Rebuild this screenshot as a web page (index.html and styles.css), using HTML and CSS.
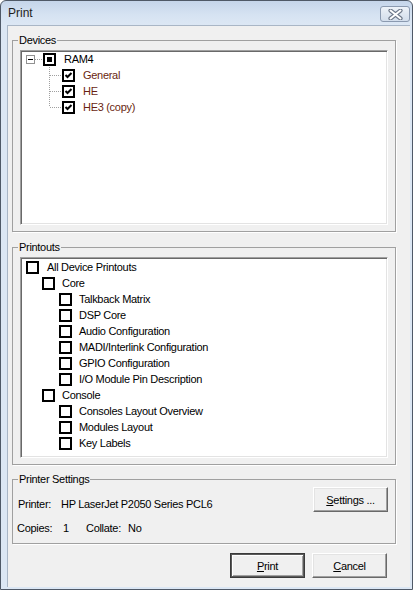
FILE: index.html
```html
<!DOCTYPE html>
<html lang="en">
<head>
    <meta charset="UTF-8">
    <title>Print</title>
    <link rel="stylesheet" href="styles.css">
</head>
<body>
    <div class="window">
        <div class="titlebar">
            <span class="title">Print</span>
            <div class="close">
                <svg width="15" height="11" viewBox="0 0 15 11">
                    <path d="M2.5 1.5 L12.5 9.5 M12.5 1.5 L2.5 9.5" stroke="#6d7889" stroke-width="4.2" stroke-linecap="round"/>
                    <path d="M2.5 1.5 L12.5 9.5 M12.5 1.5 L2.5 9.5" stroke="#fff" stroke-width="2" stroke-linecap="round"/>
                </svg>
            </div>
        </div>
        <div class="client">
            <fieldset class="group">
                <legend>Devices</legend>
                <div class="list devices">
                    <div class="row">
                        <svg class="expander" width="9" height="9" viewBox="0 0 9 9">
                            <rect x="0.5" y="0.5" width="8" height="8" fill="#fff" stroke="#919191"/>
                            <path d="M2 4.5 H7" stroke="#000"/>
                        </svg>
                        <span class="hline"></span>
                        <svg class="cb" width="13" height="13" viewBox="0 0 13 13">
                            <rect x="1" y="1" width="11" height="11" fill="#fff" stroke="#000" stroke-width="2"/>
                            <rect x="4" y="4" width="5" height="5" fill="#000"/>
                        </svg>
                        <span class="label">RAM4</span>
                    </div>
                    <div class="children">
                        <div class="row">
                            <span class="branch"></span>
                            <svg class="cb" width="13" height="13" viewBox="0 0 13 13">
                                <rect x="1" y="1" width="11" height="11" fill="#fff" stroke="#000" stroke-width="2"/>
                                <path d="M3.5 6 L5.5 8 L9.5 4" fill="none" stroke="#000" stroke-width="2"/>
                            </svg>
                            <span class="label dev">General</span>
                        </div>
                        <div class="row">
                            <span class="branch"></span>
                            <svg class="cb" width="13" height="13" viewBox="0 0 13 13">
                                <rect x="1" y="1" width="11" height="11" fill="#fff" stroke="#000" stroke-width="2"/>
                                <path d="M3.5 6 L5.5 8 L9.5 4" fill="none" stroke="#000" stroke-width="2"/>
                            </svg>
                            <span class="label dev">HE</span>
                        </div>
                        <div class="row">
                            <span class="branch"></span>
                            <svg class="cb" width="13" height="13" viewBox="0 0 13 13">
                                <rect x="1" y="1" width="11" height="11" fill="#fff" stroke="#000" stroke-width="2"/>
                                <path d="M3.5 6 L5.5 8 L9.5 4" fill="none" stroke="#000" stroke-width="2"/>
                            </svg>
                            <span class="label dev">HE3 (copy)</span>
                        </div>
                    </div>
                </div>
            </fieldset>

            <fieldset class="group printouts">
                <legend>Printouts</legend>
                <div class="list outs">
                    <div class="row lv0"><span class="box"></span><span class="label">All Device Printouts</span></div>
                    <div class="row lv1"><span class="box"></span><span class="label">Core</span></div>
                    <div class="row lv2"><span class="box"></span><span class="label">Talkback Matrix</span></div>
                    <div class="row lv2"><span class="box"></span><span class="label">DSP Core</span></div>
                    <div class="row lv2"><span class="box"></span><span class="label">Audio Configuration</span></div>
                    <div class="row lv2"><span class="box"></span><span class="label">MADI/Interlink Configuration</span></div>
                    <div class="row lv2"><span class="box"></span><span class="label">GPIO Configuration</span></div>
                    <div class="row lv2"><span class="box"></span><span class="label">I/O Module Pin Description</span></div>
                    <div class="row lv1"><span class="box"></span><span class="label">Console</span></div>
                    <div class="row lv2"><span class="box"></span><span class="label">Consoles Layout Overview</span></div>
                    <div class="row lv2"><span class="box"></span><span class="label">Modules Layout</span></div>
                    <div class="row lv2"><span class="box"></span><span class="label">Key Labels</span></div>
                </div>
            </fieldset>

            <fieldset class="group settings">
                <legend>Printer Settings</legend>
                <div class="ps-body">
                    <div class="ps-info">
                        <div class="line"><span class="key">Printer:</span><span>HP LaserJet P2050 Series PCL6</span></div>
                        <div class="line copies"><span class="key wide">Copies:</span><span class="num">1</span><span class="key coll">Collate:</span><span>No</span></div>
                    </div>
                    <button class="btn"><u>S</u>ettings ...</button>
                </div>
            </fieldset>

            <div class="actions">
                <button class="btn default"><u>P</u>rint</button>
                <button class="btn"><u>C</u>ancel</button>
            </div>
        </div>
    </div>
</body>
</html>
```

FILE: styles.css
```css
body { margin: 0; background: #fff; font-family: "Liberation Sans", Arial, sans-serif; font-size: 11px; letter-spacing: -0.3px; color: #000}

.window { width: 413px; height: 590px; box-sizing: border-box; border: 1px solid #4f5967; border-radius: 6px 6px 0 0; padding: 0 2px 2px 6px; display: flex; flex-direction: column;
    background: linear-gradient(#c5d5ea, #d6e3f2 14px, #dce7f4 24px, #dce7f4)}

.titlebar { height: 24px; display: flex; align-items: center; padding-left: 1px}
.title { font-size: 12px; letter-spacing: 0; color: #1e1e1e}
.close { margin-left: auto; margin-top: 2px; width: 30px; height: 16px; box-sizing: border-box; border: 1px solid #8b9ab0; border-radius: 3px;
    background: linear-gradient(#eef3f9, #dfe7f1 50%, #d3deec); display: flex; align-items: center; justify-content: center}

.client { flex: 1; background: #f0f0f0; border-top: 1px solid #a9b6c6; border-left: 1px solid #a9b6c6; padding: 0 14px 0 4px; display: flex; flex-direction: column}

.group { margin: 7px 0 0; padding: 3px 7px 6px 7px; border: 1px solid #a0a0a0; box-shadow: 1px 1px 0 #fff; min-width: 0}
.group legend { margin-left: -2px; padding: 0 1px; line-height: 14px; background: #f0f0f0}
.printouts { margin-top: 8px}
.settings { padding: 1px 7px 8px 5px}
.settings legend { margin-left: 0}

.list { background: #fff; border: 1px solid; border-color: #a0a0a0 #fff #fff #a0a0a0; box-shadow: inset 1px 1px #696969, inset -1px -1px #e3e3e3; padding: 1px 2px}
.devices { height: 175px; box-sizing: border-box; padding: 0 2px 0 5px}
.outs { height: 201px; box-sizing: border-box; padding-left: 5px}

.row { height: 16px; display: flex; align-items: center; white-space: nowrap}
.label { margin-left: 8px}
.dev { color: #6a1f10}

.hline { width: 8px; height: 1px; background: repeating-linear-gradient(to right, #a0a0a0 0 1px, transparent 1px 2px)}
.children { margin-left: 23px; background: repeating-linear-gradient(to bottom, #a0a0a0 0 1px, transparent 1px 2px) no-repeat left top / 1px calc(100% - 8px)}
.branch { width: 12px; height: 1px; margin-left: 1px; background: repeating-linear-gradient(to right, #a0a0a0 0 1px, transparent 1px 2px)}

.box { width: 13px; height: 13px; box-sizing: border-box; border: 2px solid #000; background: #fff; flex: none}
.lv0 .label { margin-left: 8px}
.lv1 { padding-left: 16px}
.lv1 .label, .lv2 .label { margin-left: 7px}
.lv2 { padding-left: 33px}

.ps-body { display: flex; align-items: flex-start}
.ps-info { flex: 1; padding-top: 10px}
.line { height: 14px; line-height: 14px; display: flex; white-space: nowrap}
.copies { margin-top: 10px; margin-left: -1px}
.key { width: 43px}
.key.wide { width: 46px}
.num { width: 23px}
.coll { width: 42px}

.btn { font: inherit; letter-spacing: inherit; color: #000; background: #f0f0f0; width: 75px; height: 25px; padding: 0; border: 1px solid; border-color: #fff #696969 #696969 #fff;
    box-shadow: inset -1px -1px #a0a0a0, inset 1px 1px #e3e3e3}
.btn.default { border-color: #3a3a3a; box-shadow: inset 0 0 0 1px #5a5a5a, inset 2px 2px #fff, inset -2px -2px #a0a0a0}
.actions { display: flex; justify-content: flex-end; gap: 7px; margin: 9px 9px 0 0}
```
